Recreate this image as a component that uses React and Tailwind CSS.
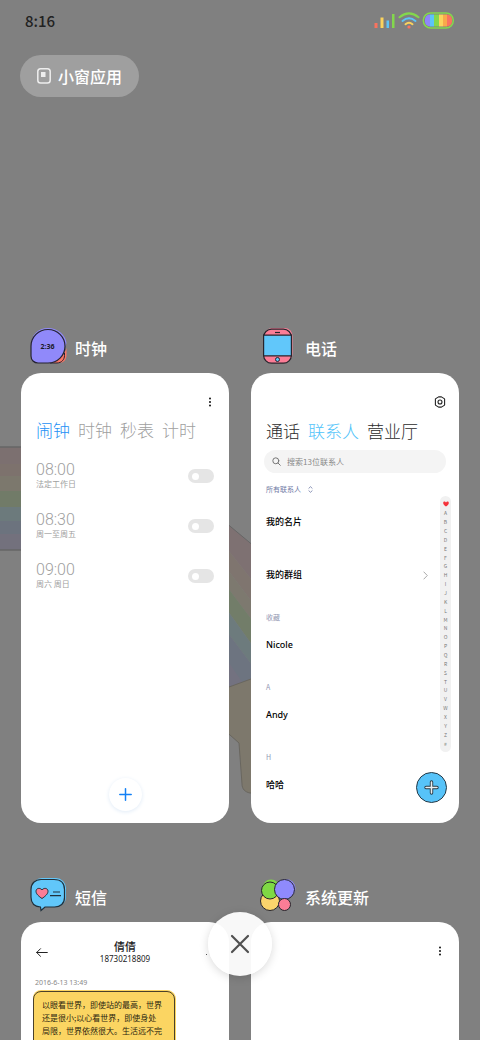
import React from 'react';

const alarms = [
  { time: '08:00', days: '法定工作日' },
  { time: '08:30', days: '周一至周五' },
  { time: '09:00', days: '周六 周日' },
];

const sections = [
  { label: '收藏', name: 'Nicole' },
  { label: 'A', name: 'Andy' },
  { label: 'H', name: '哈哈' },
];

const letters = 'ABCDEFGHIJKLMNOPQRSTUVWXYZ#'.split('');

const RainbowWallpaper = () => (
  <svg className="absolute left-0 top-0 h-[1040px] w-[480px]" viewBox="0 0 480 1040" aria-hidden="true">
    <path fill="#7c7070" d="M0 447h30v17H0z" />
    <path fill="#7d726d" d="M0 464h30v12H0z" />
    <path fill="#7c786d" d="M0 476h30v15H0z" />
    <path fill="#717b68" d="M0 491h30v16H0z" />
    <path fill="#6c7a7c" d="M0 507h30v14H0z" />
    <path fill="#6c737e" d="M0 521h30v13H0z" />
    <path fill="#73717d" d="M0 534h30v16H0z" />
    <path d="M0 447h30M0 550h30" stroke="#666" strokeWidth="1.500" />
    <path fill="#7e7172" d="M225 522l30 25v37l-30-38z" />
    <path fill="#7f756f" d="M225 546l30 38v22l-30-40z" />
    <path fill="#7d796f" d="M225 566l30 40v18l-30-40z" />
    <path fill="#727d69" d="M225 584l30 40v25l-30-42z" />
    <path fill="#6d7b7d" d="M225 607l30 42v20l-30-40z" />
    <path fill="#6d7480" d="M225 629l30 40v20h-30z" />
    <path fill="#737280" d="M225 657l22 32h-22z" />
    <path d="M225 522l30 25" stroke="#666" />
    <path
      d="M225 688.500l30-11V793h-5c-5-1-8-4-8-9l-3-41-9-8-5-3z"
      fill="#7d786c"
      stroke="#69665f"
    />
  </svg>
);

const StatusIcons = () => (
  <svg width="82" height="18" viewBox="0 0 82 18" fill="none" aria-hidden="true">
    <path d="M1.500 11h3v5h-3z" fill="#f9735f" />
    <path d="M7.500 5.500h3V16h-3z" fill="#fbd35d" />
    <path d="M13.500 8.500h2.500V16h-2.500z" fill="#5cc4f8" />
    <path d="M19 2h2.500v14H19z" fill="#83d84c" />
    <g strokeLinecap="round" strokeWidth="2">
      <path d="M26.500 5.300Q36-2.500 45.500 5.300" stroke="#83d84c" />
      <path d="M29.500 8.900Q36 3.500 42.500 8.900" stroke="#5cc4f8" />
      <path d="M32.500 12.200Q36 9.300 39.500 12.200" stroke="#fbd35d" />
    </g>
    <circle cx="36" cy="15" r="1.600" fill="#f9735f" />
    <clipPath id="cell">
      <rect x="52" y="2.500" width="27" height="12" rx="5" />
    </clipPath>
    <rect x="50.300" y="0.900" width="30" height="15.200" rx="7.500" stroke="#83d84c" strokeWidth="1.500" />
    <g clipPath="url(#cell)">
      <path fill="#8f86fb" d="M52 2h5v13h-5z" />
      <path fill="#5cc4f8" d="M57 2h4v13h-4z" />
      <path fill="#83d84c" d="M61 2h5v13h-5z" />
      <path fill="#fbd35d" d="M66 2h4v13h-4z" />
      <path fill="#f9a94b" d="M70 2h4v13h-4z" />
      <path fill="#f9735f" d="M74 2h6v13h-6z" />
    </g>
  </svg>
);

const ClockIcon = () => (
  <svg width="37" height="36" viewBox="0 0 37 36" aria-hidden="true">
    <path d="M18 0c10 0 17.500 7 18.500 15l-5 13-22 6-8.500-4V17C1 7 8 0 18 0z" fill="#9089fa" />
    <path d="M36.500 20v7c0 5-3 8-8 8h-9c8-2 15-7 17-15z" fill="#fa7564" />
    <path d="M34.500 25v2.500c0 4-3 7.500-7.500 7.500h-7" fill="none" stroke="#252331" />
    <path
      d="M18 1.500c9.500 0 17 7.500 17 16.800S27.500 35 18 35H8c-4 0-7-3-7-7V18.300C1 9 8.500 1.500 18 1.500z"
      fill="#9089fa"
      stroke="#252331"
      strokeWidth="1.200"
    />
    <text x="17.500" y="21" textAnchor="middle" fontSize="7" fontWeight="700" fontFamily="Noto Sans, sans-serif" fill="#1b1926">
      2:36
    </text>
  </svg>
);

const PhoneIcon = () => (
  <svg width="37" height="36" viewBox="0 0 37 36" aria-hidden="true">
    <rect x="4.500" y="0" width="28" height="34" rx="8" fill="#fb7d96" />
    <rect x="3.600" y="1.200" width="27.800" height="34" rx="8" fill="#fb7d96" stroke="#28242c" strokeWidth="1.200" />
    <path d="M3.600 7.200h27.800v20.600H3.600z" fill="#61c7fa" stroke="#28242c" strokeWidth="1.200" />
    <path d="M15 4.500h5" stroke="#28242c" strokeWidth="1.200" />
    <circle cx="17.500" cy="31.500" r="2" fill="#61c7fa" stroke="#28242c" />
  </svg>
);

const MessageIcon = () => (
  <svg width="37" height="36" viewBox="0 0 37 36" aria-hidden="true">
    <rect x="2" y="1" width="34" height="29" rx="10" fill="#61c7fa" />
    <path
      d="M11 2.500h13c7 0 10.500 4 10.500 10v8c0 6-4 9.500-10 9.500h-9.500l-4 3.500-.5-3.500C4 29.500 1 26 1 20v-7.500c0-6 4-10 10-10z"
      fill="#61c7fa"
      stroke="#20303b"
      strokeWidth="1.200"
    />
    <path
      d="M12 21.500c-3-2-6-4.500-6-7.200 0-3.200 4-4 6-1.300 2-2.700 6-1.900 6 1.300 0 2.700-3 5.200-6 7.200z"
      fill="#fb7d96"
      stroke="#20303b"
    />
    <path d="M23 15h7M20 18.700h11" stroke="#20303b" strokeWidth="1.200" />
  </svg>
);

const UpdateIcon = () => (
  <svg width="37" height="36" viewBox="0 0 37 36" aria-hidden="true">
    <circle cx="11" cy="11" r="8.500" fill="#7fd944" />
    <circle cx="26" cy="11.500" r="9.500" fill="#8f8afc" />
    <g stroke="#26252c">
      <circle cx="10" cy="24" r="9.500" fill="#fbd46c" />
      <circle cx="10" cy="13.500" r="8.500" fill="#7fd944" />
      <circle cx="24.500" cy="12.500" r="10" fill="#8f8afc" />
      <circle cx="24.500" cy="27.500" r="6" fill="#fb7d96" />
    </g>
  </svg>
);

const MoreButton = () => (
  <button type="button" aria-label="更多" className="flex h-4 w-4 items-center justify-center">
    <svg width="4" height="10" viewBox="0 0 4 10" fill="#111">
      <circle cx="2" cy="1.500" r="1" />
      <circle cx="2" cy="5" r="1" />
      <circle cx="2" cy="8.500" r="1" />
    </svg>
  </button>
);

const RecentApp = ({ icon, title, children }) => (
  <section>
    <div className="mb-[9px] flex h-9 items-center gap-2 pl-[9px]">
      {icon}
      <h2 className="pt-1 text-base font-medium text-white">{title}</h2>
    </div>
    <div className="relative flex aspect-[208/450] flex-col overflow-hidden rounded-[20px] bg-white">{children}</div>
  </section>
);

const ClockCard = () => (
  <>
    <div className="flex justify-end pr-[11px] pt-[21px]">
      <MoreButton />
    </div>
    <nav className="mt-2 flex h-6 items-center gap-2 pl-[15px] text-[17px] font-light text-[#a0a0a0]">
      <button type="button" className="text-[#2490f5]">闹钟</button>
      <button type="button">时钟</button>
      <button type="button">秒表</button>
      <button type="button">计时</button>
    </nav>
    <ul className="mt-[9px] px-[15px]">
      {alarms.map((alarm) => (
        <li key={alarm.time}>
          <label className="flex h-[50px] items-center justify-between text-[#a0a0a0]">
            <span>
              <span className="block font-[Roboto] text-[16px] font-light leading-4">{alarm.time}</span>
              <span className="block text-[8px] leading-3">{alarm.days}</span>
            </span>
            <input
              type="checkbox"
              className="flex h-[14px] w-[26px] appearance-none items-center rounded-full bg-[#e5e5e5] pl-1 before:h-[7px] before:w-[7px] before:rounded-full before:bg-white"
            />
          </label>
        </li>
      ))}
    </ul>
    <button
      type="button"
      aria-label="添加闹钟"
      className="mx-auto mb-3 mt-auto flex h-[33px] w-[33px] items-center justify-center rounded-full bg-white shadow-[0_1px_4px_#e0ebf7]"
    >
      <svg width="13" height="13" viewBox="0 0 13 13" stroke="#1380f5" strokeWidth="1.500" strokeLinecap="round">
        <path d="M6.500.8v11.400M.8 6.500h11.400" />
      </svg>
    </button>
  </>
);

const ContactsCard = () => (
  <>
    <div className="flex justify-end pr-[13px] pt-[23px]">
      <button type="button" aria-label="设置">
        <svg width="12" height="12" viewBox="0 0 12 12" fill="none" stroke="#222" strokeWidth="1.100">
          <path d="M4.600.9h2.800l3.200 2v6.200l-3.200 2H4.600l-3.200-2V2.900z" strokeLinejoin="round" />
          <circle cx="6" cy="6" r="2" />
        </svg>
      </button>
    </div>
    <nav className="mt-[11px] flex h-6 items-center gap-2 pl-[15px] text-[17px] font-light text-[#2b2b2b]">
      <button type="button">通话</button>
      <button type="button" className="text-[#4fc3fa]">联系人</button>
      <button type="button">营业厅</button>
    </nav>
    <label className="mx-[13px] mt-[7px] flex h-[23px] shrink-0 items-center gap-[6px] rounded-full bg-[#f4f4f4] pl-2">
      <svg width="9" height="9" viewBox="0 0 9 9" fill="none" stroke="#777" strokeLinecap="round">
        <circle cx="3.800" cy="3.800" r="3" />
        <path d="M6 6l2.300 2.300" />
      </svg>
      <input
        type="text"
        aria-label="搜索联系人"
        placeholder="搜索13位联系人"
        className="min-w-0 flex-1 bg-transparent text-[8px] outline-none placeholder:text-[#888]"
      />
    </label>
    <div className="flex pl-[15px] pr-2">
      <div className="flex-1 text-[9px] font-medium text-black">
        <button type="button" className="flex h-8 items-center gap-[7px] text-[7px] font-normal text-[#6f7aa5]">
          所有联系人
          <svg width="5" height="7" viewBox="0 0 5 7" fill="none" stroke="#6f7aa5" strokeWidth="0.800">
            <path d="M.6 2.500L2.500.7l1.900 1.800M.6 4.500l1.900 1.800 1.900-1.800" />
          </svg>
        </button>
        <div className="flex h-[34px] items-center">我的名片</div>
        <div className="mt-5 flex h-8 items-center justify-between pr-3">
          我的群组
          <svg width="5" height="9" viewBox="0 0 5 9" fill="none" stroke="#aaa">
            <path d="M.6.700l3.700 3.800L.6 8.300" />
          </svg>
        </div>
        <div className="mt-[18px]">
          {sections.map((section) => (
            <div key={section.label} className="mb-[14px]">
              <div className="flex h-4 items-center text-[7px] font-normal text-[#9399b3]">{section.label}</div>
              <div className="flex h-10 items-center font-['Noto_Sans','Noto_Sans_CJK_SC',sans-serif]">{section.name}</div>
            </div>
          ))}
        </div>
      </div>
      <div className="mt-[23px] flex h-[256px] w-[11px] flex-col items-center rounded-full bg-[#f1f1f1] py-1 text-[5px] leading-[8px] text-[#777]">
        <span className="flex flex-1 items-center">
          <svg width="6" height="6" viewBox="0 0 6 6" fill="#f5333b">
            <path d="M3 5.600C1.300 4.400.2 3.300.2 2 .2.500 2.100.1 3 1.400 3.900.1 5.800.500 5.800 2 5.800 3.300 4.700 4.400 3 5.600z" />
          </svg>
        </span>
        {letters.map((letter) => (
          <span key={letter} className="flex flex-1 items-center">{letter}</span>
        ))}
      </div>
    </div>
    <button
      type="button"
      aria-label="新建联系人"
      className="absolute bottom-5 right-3 flex h-[31px] w-[31px] items-center justify-center rounded-full border border-[#253844] bg-[#57c3f9]"
    >
      <svg width="15" height="15" viewBox="0 0 15 15" strokeLinecap="round">
        <path d="M7.500 2v11M2 7.500h11" stroke="#253844" strokeWidth="3.400" />
        <path d="M7.500 2v11M2 7.500h11" stroke="#e9eef1" strokeWidth="1.600" />
      </svg>
    </button>
  </>
);

const MessageCard = () => (
  <>
    <header className="flex items-center justify-between px-[15px] pt-[17px]">
      <button type="button" aria-label="返回" className="w-3">
        <svg width="12" height="9" viewBox="0 0 12 9" fill="none" stroke="#222" strokeLinecap="round" strokeLinejoin="round">
          <path d="M4.500.7L.7 4.500l3.800 3.800M.7 4.500h10.600" />
        </svg>
      </button>
      <div className="text-center text-[#222]">
        <div className="text-[11px] font-medium leading-[14px]">倩倩</div>
        <div className="font-['Noto_Sans',sans-serif] text-[8px] leading-3">18730218809</div>
      </div>
      <button type="button" aria-label="详情" className="flex h-3 w-3 items-center">
        <span className="mt-1 ml-1 h-px w-px bg-[#555]" />
      </button>
    </header>
    <div className="mt-[13px] pl-[14px] text-[7px] leading-[10px] text-[#888] font-['Noto_Sans',sans-serif]">2016-6-13 13:49</div>
    <div className="ml-3 mt-[3px] mr-[54px] flex-1 rounded-lg border border-[#4a412a] bg-[#fbd562] px-2 pt-[6px] text-[8px] leading-[13px] text-[#2b2510] shadow-[0_-1px_0_#fbd562,1px_0_0_#fbd562]">
      <p className="whitespace-nowrap">
        以眼看世界，即使站的最高，世界
        <br />
        还是很小;以心看世界，即使身处
        <br />
        局限，世界依然很大。生活远不完
      </p>
    </div>
  </>
);

export default function App() {
  return (
    <div
      lang="zh-CN"
      className="relative h-screen overflow-hidden bg-[#808080] font-['Noto_Sans_CJK_SC',sans-serif]"
    >
      <RainbowWallpaper />
      <div className="relative">
        <div className="flex h-[42px] items-center justify-between pl-[25px] pr-[25px]">
          <span className="text-[15px] font-medium text-[#222]">8:16</span>
          <StatusIcons />
        </div>
        <button
          type="button"
          className="ml-5 mt-[13px] flex h-[42px] items-center gap-[7px] rounded-full bg-[#9f9f9f] px-[17px] text-base font-medium text-white"
        >
          <svg width="14" height="16" viewBox="0 0 14 16" fill="none">
            <rect x="0.800" y="0.800" width="12.400" height="14.200" rx="2.800" stroke="#eee" strokeWidth="1.500" />
            <path d="M4 4h4.500v5H4z" fill="#eee" />
          </svg>
          小窗应用
        </button>
        <main className="mt-[231px] grid grid-cols-2 gap-x-[22px] gap-y-[54px] px-[21px]">
          <RecentApp icon={<ClockIcon />} title="时钟">
            <ClockCard />
          </RecentApp>
          <RecentApp icon={<PhoneIcon />} title="电话">
            <ContactsCard />
          </RecentApp>
          <RecentApp icon={<MessageIcon />} title="短信">
            <MessageCard />
          </RecentApp>
          <RecentApp icon={<UpdateIcon />} title="系统更新">
            <div className="flex justify-end pr-[11px] pt-[21px]">
              <MoreButton />
            </div>
          </RecentApp>
        </main>
      </div>
      <button
        type="button"
        aria-label="清除全部"
        className="absolute bottom-16 left-1/2 flex h-16 w-16 -translate-x-1/2 items-center justify-center rounded-full bg-white/94 shadow-[0_2px_10px_rgba(0,0,0,0.15)]"
      >
        <svg width="20" height="20" viewBox="0 0 20 20" stroke="#505050" strokeWidth="2.200" strokeLinecap="round">
          <path d="M2 2l16 16M18 2L2 18" />
        </svg>
      </button>
    </div>
  );
}
